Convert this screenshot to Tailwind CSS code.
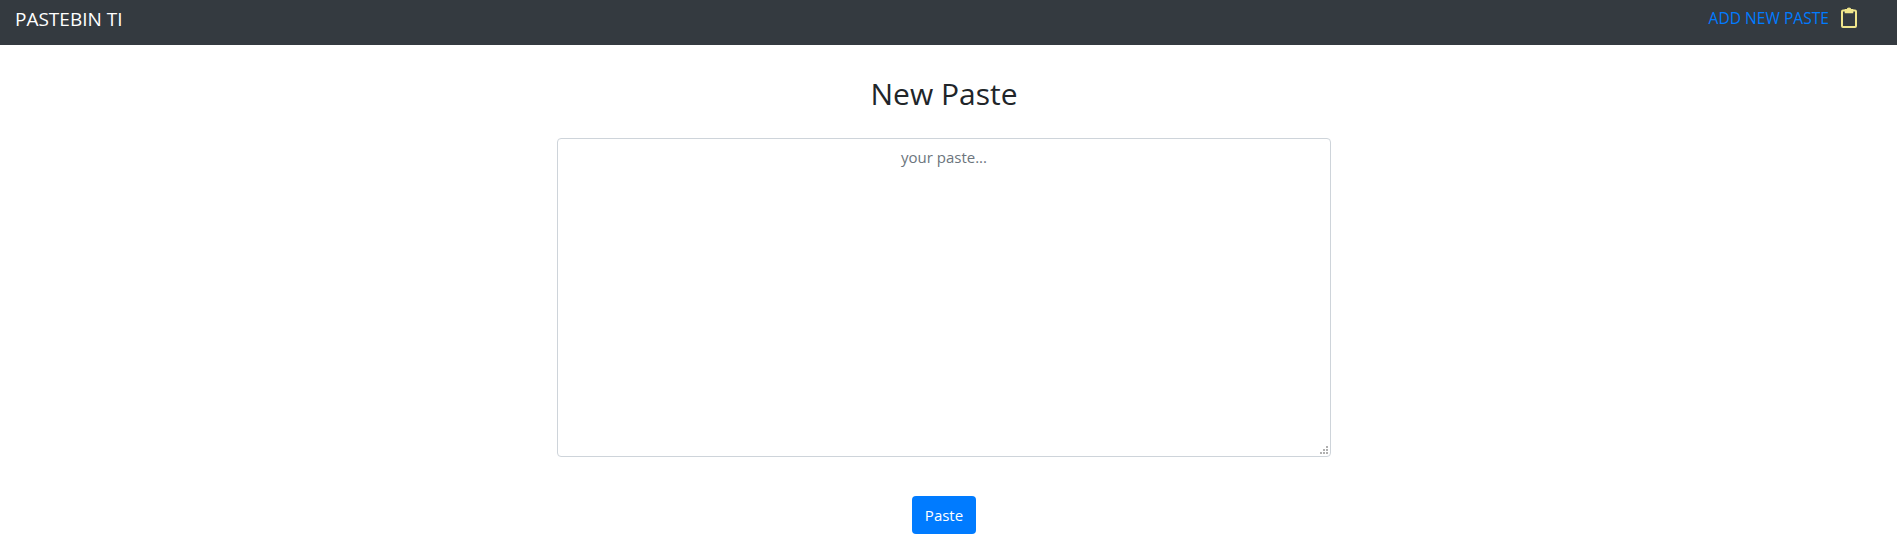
<!DOCTYPE html>
<html>
<head>
<meta charset="utf-8">
<script src="https://cdn.jsdelivr.net/npm/@tailwindcss/browser@4"></script>
</head>
<body class="bg-white font-['Open_Sans',sans-serif] text-[#212529] overflow-hidden">
<nav class="h-[45px] bg-[#343a40] flex items-center justify-between pl-[15px] pr-[40px]">
  <a class="text-[19px] text-white leading-none -mt-[7px]">PASTEBIN TI</a>
  <div class="flex items-center gap-[12px] -mt-[7px]">
    <a class="text-[15.6px] text-[#007bff] leading-none">ADD NEW PASTE</a>
    <svg class="w-[16px] h-[21px] mb-[3px] text-[#f0e68c]" viewBox="0 0 16 21" fill="none" stroke="currentColor" stroke-width="2">
      <path d="M4.5 3.5H2a1 1 0 0 0-1 1V19a1 1 0 0 0 1 1h12a1 1 0 0 0 1-1V4.5a1 1 0 0 0-1-1h-2.5"/>
      <path fill="currentColor" stroke-width="1.6" d="M4.5 5.5V2.8h2a1.5 1.5 0 0 1 3 0h2v2.7z"/>
    </svg>
  </div>
</nav>
<main class="w-[1888px] flex flex-col items-center">
  <h1 class="mt-[30px] text-[30px] leading-[38px] font-normal">New Paste</h1>
  <div class="relative mt-[25px] w-[774px] h-[319px]">
    <textarea class="w-full h-full block border border-[#ced4da] rounded-[4px] py-[6px] px-[12px] text-center text-[15px] leading-[24px] placeholder:text-[#6c757d] resize-none outline-none" placeholder="your paste..."></textarea>
    <svg class="absolute right-[3px] bottom-[3px] w-[8px] h-[8px] text-[#b0b0b0]" viewBox="0 0 8 8" fill="currentColor">
      <rect x="6" y="0" width="2" height="2"/>
      <rect x="3" y="3" width="2" height="2"/>
      <rect x="6" y="3" width="2" height="2"/>
      <rect x="0" y="6" width="2" height="2"/>
      <rect x="3" y="6" width="2" height="2"/>
      <rect x="6" y="6" width="2" height="2"/>
    </svg>
  </div>
  <button class="mt-[39px] w-[64px] h-[38px] rounded-[4px] bg-[#007bff] text-white text-[15px]">Paste</button>
</main>
</body>
</html>
